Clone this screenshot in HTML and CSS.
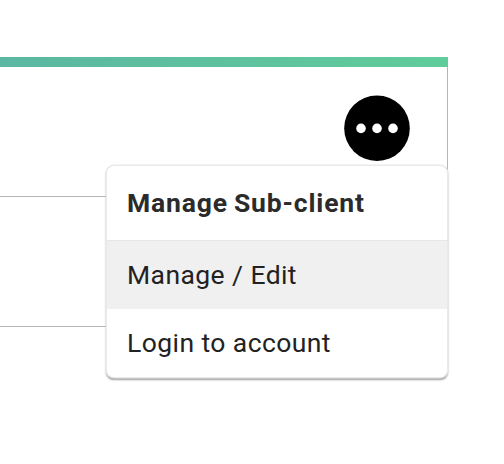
FILE: index.html
```html
<!DOCTYPE html>
<html lang="en">
<head>
  <meta charset="UTF-8" />
  <meta name="viewport" content="width=device-width, initial-scale=1.0" />
  <title>Sub-clients</title>
  <link rel="stylesheet" href="styles.css">
</head>
<body>
  <div class="client-list">
    <div class="client-row">
      <div class="actions">
        <button class="more-btn" aria-label="More actions">
          <svg width="66" height="66" viewBox="0 0 66 66">
            <circle cx="33" cy="33.2" r="32.8" fill="#000" />
            <circle cx="17" cy="33.4" r="4.8" fill="#fff" />
            <circle cx="33" cy="33.4" r="4.8" fill="#fff" />
            <circle cx="49" cy="33.4" r="4.8" fill="#fff" />
          </svg>
        </button>
        <div class="menu">
          <div class="menu-title">Manage Sub-client</div>
          <a class="menu-item active">Manage / Edit</a>
          <a class="menu-item">Login to account</a>
        </div>
      </div>
    </div>
    <div class="client-row"></div>
  </div>
</body>
</html>
```
FILE: styles.css
```css
body {
  margin: 0;
  padding-top: 57px;
  min-height: 100vh;
  box-sizing: border-box;
  background: #fff;
  color: #222;
  font-family: Roboto, sans-serif;
}

.client-list {
  width: 448px;
}
.client-list::before {
  content: '';
  display: block;
  height: 10px;
  background: linear-gradient(90deg, #5bb7a1, #60cc9b);
}

.client-row {
  display: flex;
  justify-content: flex-end;
  height: 130px;
  box-sizing: border-box;
  border-right: 1px solid #b5b5b5;
  border-bottom: 1px solid #b5b5b5;
}

.actions {
  position: relative;
  padding: 28px 37px 0 0;
}
.more-btn {
  display: block;
  padding: 0;
  border: none;
  background: none;
  cursor: pointer;
}
.more-btn svg {
  display: block;
}

/* Dropdown */
.menu {
  position: absolute;
  top: 99px;
  right: 0;
  width: 340px;
  background: #fff;
  border-radius: 7px;
  box-shadow: 0 0 0 1.5px #e9e9e9, 0 2px 2px 0.5px rgba(0, 0, 0, 0.38);
  overflow: hidden;
}
.menu-title,
.menu-item {
  display: flex;
  align-items: center;
  height: 66px;
  padding: 0 0 2px 20px;
  font-size: 26.5px;
  letter-spacing: 0.42px;
  white-space: nowrap;
}
.menu-title {
  height: 72px;
  font-weight: 700;
  letter-spacing: 0.85px;
  word-spacing: -1.5px;
  color: #2b2b2b;
  border-bottom: 1px solid #e6e6e6;
}
.menu-item.active {
  background: #f0f0f0;
}
```
